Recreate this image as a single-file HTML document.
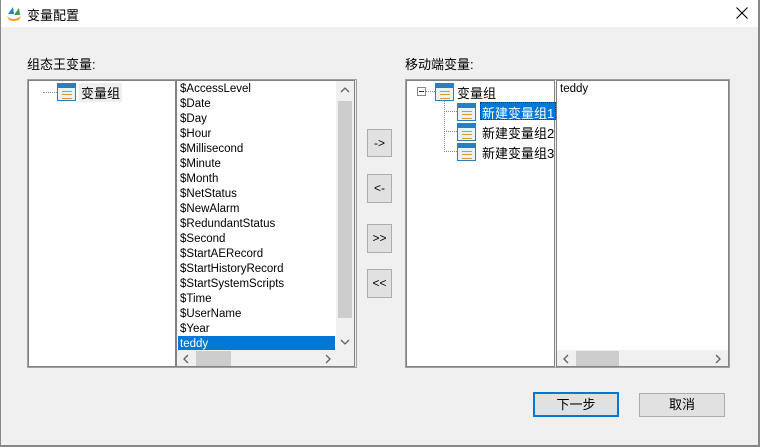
<!DOCTYPE html>
<html><head><meta charset="utf-8"><style>
*{margin:0;padding:0;box-sizing:border-box}
body{width:760px;height:447px;background:#f0f0f0;position:relative;overflow:hidden;font-family:"Liberation Sans","Noto Sans CJK SC",sans-serif;font-size:12px;color:#000}
.a{position:absolute}
.pane{position:absolute;background:#fff;border:1px solid #828282}
.grp{position:absolute;border:1px solid #a0a0a0;background:#f0f0f0}
.btn{position:absolute;background:#e1e1e1;border:1px solid #adadad;text-align:center;font-size:12px}
.li{position:absolute;left:3px;height:15px;line-height:17px;font-size:11.5px}
.ic{position:absolute;width:19px;height:18px;border:1px solid #2a7fc0;background:#e8f2fb}
.ic:before{content:"";position:absolute;left:0;top:0;right:0;height:4px;background:#2a7fc0}
.ic:after{content:"";position:absolute;left:4px;top:7px;width:10px;height:6px;border-top:1px solid #d89a2a;border-bottom:1px solid #d89a2a;background:linear-gradient(#d89a2a,#d89a2a) 0 2px/10px 1px no-repeat}
.dot{position:absolute;border-color:#888;border-style:dotted;border-width:0}
</style></head><body>
<div class="a" style="left:0;top:0;width:760px;height:27px;background:#fff"></div>
<div class="a" style="left:0;top:0;width:1px;height:447px;background:#888"></div>
<div class="a" style="left:758px;top:0;width:2px;height:447px;background:#888"></div>
<div class="a" style="left:0;top:445px;width:760px;height:2px;background:#888"></div>
<svg class="a" style="left:5px;top:4px" width="18" height="18" viewBox="0 0 18 18"><path d="M3 10 L8 3 L9 10 Z" fill="#2a7fc0"/><path d="M9 11 L14 4 L15 11 Z" fill="#3a9a4a"/><path d="M2 12 Q8 18 16 12 L14 16 Q8 18 4 16Z" fill="#f0a020"/></svg>
<div class="a" style="left:27px;top:5px;font-size:13px">变量配置</div>
<svg class="a" style="left:736px;top:7px" width="12" height="12" viewBox="0 0 12 12"><path d="M0.5 0.5L11.5 11.5M11.5 0.5L0.5 11.5" stroke="#000" stroke-width="1.1"/></svg>

<div class="a" style="left:27px;top:54px;font-size:13px">组态王变量:</div>
<div class="a" style="left:405px;top:54px;font-size:13px">移动端变量:</div>

<div class="grp" style="left:27px;top:79px;width:330px;height:289px"></div>
<div class="pane" style="left:28px;top:80px;width:148px;height:287px">
 <div class="dot" style="left:14px;top:11px;width:14px;border-top-width:1px"></div>
 <div class="ic" style="left:28px;top:2px"></div>
 <div class="a" style="left:50px;top:2px;font-size:13px;background:#eee;padding:0 2px">变量组</div>
</div>
<div class="pane" style="left:176px;top:80px;width:179px;height:287px;overflow:hidden">
 <div class="li" style="top:0">$AccessLevel</div>
 <div class="li" style="top:15px">$Date</div>
 <div class="li" style="top:30px">$Day</div>
 <div class="li" style="top:45px">$Hour</div>
 <div class="li" style="top:60px">$Millisecond</div>
 <div class="li" style="top:75px">$Minute</div>
 <div class="li" style="top:90px">$Month</div>
 <div class="li" style="top:105px">$NetStatus</div>
 <div class="li" style="top:120px">$NewAlarm</div>
 <div class="li" style="top:135px">$RedundantStatus</div>
 <div class="li" style="top:150px">$Second</div>
 <div class="li" style="top:165px">$StartAERecord</div>
 <div class="li" style="top:180px">$StartHistoryRecord</div>
 <div class="li" style="top:195px">$StartSystemScripts</div>
 <div class="li" style="top:210px">$Time</div>
 <div class="li" style="top:225px">$UserName</div>
 <div class="li" style="top:240px">$Year</div>
 <div class="a" style="left:1px;top:255px;width:157px;height:14px;background:#0078d7"></div>
 <div class="li" style="top:255px;color:#fff">teddy</div>
 <div class="a" style="left:159px;top:0;width:18px;height:270px;background:#f0f0f0"></div>
 <div class="a" style="left:161px;top:20px;width:14px;height:217px;background:#cdcdcd"></div>
 <svg class="a" style="left:163px;top:6px" width="10" height="6"><path d="M1 5L5 1L9 5" stroke="#606060" stroke-width="1.3" fill="none"/></svg>
 <svg class="a" style="left:163px;top:258px" width="10" height="6"><path d="M1 1L5 5L9 1" stroke="#606060" stroke-width="1.3" fill="none"/></svg>
 <div class="a" style="left:0;top:269px;width:177px;height:17px;background:#f0f0f0"></div>
 <div class="a" style="left:19px;top:270px;width:35px;height:15px;background:#cdcdcd"></div>
 <svg class="a" style="left:6px;top:273px" width="6" height="10"><path d="M5 1L1 5L5 9" stroke="#606060" stroke-width="1.3" fill="none"/></svg>
 <svg class="a" style="left:148px;top:273px" width="6" height="10"><path d="M1 1L5 5L1 9" stroke="#606060" stroke-width="1.3" fill="none"/></svg>
</div>

<div class="btn" style="left:367px;top:129px;width:25px;height:28px;line-height:26px">-&gt;</div>
<div class="btn" style="left:367px;top:174px;width:25px;height:29px;line-height:27px">&lt;-</div>
<div class="btn" style="left:367px;top:224px;width:25px;height:29px;line-height:27px">&gt;&gt;</div>
<div class="btn" style="left:367px;top:269px;width:25px;height:29px;line-height:27px">&lt;&lt;</div>

<div class="grp" style="left:405px;top:79px;width:325px;height:289px"></div>
<div class="pane" style="left:406px;top:80px;width:149px;height:287px">
 <div class="a" style="left:10px;top:6px;width:9px;height:9px;border:1px solid #888;background:#fff"></div>
 <div class="a" style="left:12px;top:10px;width:5px;height:1px;background:#333"></div>
 <div class="dot" style="left:19px;top:10px;width:9px;border-top-width:1px"></div>
 <div class="ic" style="left:28px;top:2px"></div>
 <div class="a" style="left:50px;top:2px;font-size:13px">变量组</div>
 <div class="dot" style="left:37px;top:20px;height:51px;border-left-width:1px"></div>
 <div class="dot" style="left:37px;top:30px;width:13px;border-top-width:1px"></div>
 <div class="dot" style="left:37px;top:50px;width:13px;border-top-width:1px"></div>
 <div class="dot" style="left:37px;top:70px;width:13px;border-top-width:1px"></div>
 <div class="ic" style="left:50px;top:22px"></div>
 <div class="ic" style="left:50px;top:42px"></div>
 <div class="ic" style="left:50px;top:62px"></div>
 <div class="a" style="left:73px;top:21px;width:76px;height:18px;background:#0078d7;border:1px dotted #333"></div>
 <div class="a" style="left:75px;top:22px;font-size:13px;color:#fff;white-space:nowrap">新建变量组1</div>
 <div class="a" style="left:75px;top:42px;font-size:13px;white-space:nowrap">新建变量组2</div>
 <div class="a" style="left:75px;top:62px;font-size:13px;white-space:nowrap">新建变量组3</div>
</div>
<div class="pane" style="left:556px;top:80px;width:173px;height:287px;overflow:hidden">
 <div class="li" style="top:0">teddy</div>
 <div class="a" style="left:0;top:269px;width:171px;height:17px;background:#f0f0f0"></div>
 <div class="a" style="left:19px;top:270px;width:43px;height:15px;background:#cdcdcd"></div>
 <svg class="a" style="left:6px;top:273px" width="6" height="10"><path d="M5 1L1 5L5 9" stroke="#606060" stroke-width="1.3" fill="none"/></svg>
 <svg class="a" style="left:158px;top:273px" width="6" height="10"><path d="M1 1L5 5L1 9" stroke="#606060" stroke-width="1.3" fill="none"/></svg>
</div>

<div class="btn" style="left:533px;top:392px;width:86px;height:25px;line-height:21px;border:2px solid #0078d7;font-size:13px">下一步</div>
<div class="btn" style="left:639px;top:393px;width:86px;height:24px;line-height:22px;font-size:13px">取消</div>
</body></html>
